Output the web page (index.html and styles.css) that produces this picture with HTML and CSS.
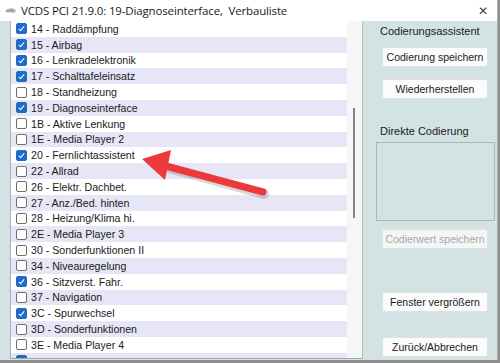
FILE: index.html
```html
<!DOCTYPE html>
<html lang="de">
<head>
    <meta charset="UTF-8">
    <title>VCDS PCI 21.9.0: 19-Diagnoseinterface, Verbauliste</title>
    <link rel="stylesheet" href="styles.css">
</head>
<body>

    <div class="window">
        <div class="titlebar">
            <svg class="app-icon" width="13" height="9" viewBox="0 0 13 9">
                <path d="M1 6 L3 3 L8 2 L12 4 L11 7 Z" fill="#b4c0cc"/>
                <path d="M2 5 L10 4" stroke="#7d8ea0" stroke-width="1"/>
            </svg>
            <span class="title">VCDS PCI 21.9.0: 19-Diagnoseinterface,&nbsp; Verbauliste</span>
            <span class="close">✕</span>
        </div>

        <div class="main">
            <div class="list">
                <div class="rows">
                    <label class="row"><span class="box checked"></span>14 - Raddämpfung</label>
                    <label class="row"><span class="box checked"></span>15 - Airbag</label>
                    <label class="row"><span class="box checked"></span>16 - Lenkradelektronik</label>
                    <label class="row"><span class="box checked"></span>17 - Schalttafeleinsatz</label>
                    <label class="row"><span class="box"></span>18 - Standheizung</label>
                    <label class="row"><span class="box checked"></span>19 - Diagnoseinterface</label>
                    <label class="row"><span class="box"></span>1B - Aktive Lenkung</label>
                    <label class="row"><span class="box"></span>1E - Media Player 2</label>
                    <label class="row"><span class="box checked"></span>20 - Fernlichtassistent</label>
                    <label class="row"><span class="box"></span>22 - Allrad</label>
                    <label class="row"><span class="box"></span>26 - Elektr. Dachbet.</label>
                    <label class="row"><span class="box"></span>27 - Anz./Bed. hinten</label>
                    <label class="row"><span class="box"></span>28 - Heizung/Klima hi.</label>
                    <label class="row"><span class="box"></span>2E - Media Player 3</label>
                    <label class="row"><span class="box"></span>30 - Sonderfunktionen II</label>
                    <label class="row"><span class="box"></span>34 - Niveauregelung</label>
                    <label class="row"><span class="box checked"></span>36 - Sitzverst. Fahr.</label>
                    <label class="row"><span class="box"></span>37 - Navigation</label>
                    <label class="row"><span class="box checked"></span>3C - Spurwechsel</label>
                    <label class="row"><span class="box"></span>3D - Sonderfunktionen</label>
                    <label class="row"><span class="box"></span>3E - Media Player 4</label>
                    <div class="row"><span class="box checked"></span></div>
                </div>
                <div class="scrollbar">
                    <div class="thumb"></div>
                </div>
            </div>

            <div class="panel">
                <div class="label first">Codierungsassistent</div>
                <button class="btn">Codierung speichern</button>
                <button class="btn">Wiederherstellen</button>
                <div class="label second">Direkte Codierung</div>
                <div class="code-box"></div>
                <button class="btn disabled">Codierwert speichern</button>
                <button class="btn grow">Fenster vergrößern</button>
                <button class="btn last">Zurück/Abbrechen</button>
            </div>
        </div>
    </div>

    <svg class="arrow" width="500" height="363" viewBox="0 0 500 363">
        <line x1="263" y1="192" x2="160" y2="164" stroke="rgba(0,0,0,0.15)" stroke-width="10" stroke-linecap="round" transform="translate(1,2)"/>
        <line x1="263" y1="192" x2="162" y2="165" stroke="#ec3a3a" stroke-width="7" stroke-linecap="round"/>
        <path d="M142 159 L171 150 L165 180 Z" fill="#ec3a3a"/>
    </svg>

</body>
</html>
```

FILE: styles.css
```css
body {
    margin: 0;
    width: 500px;
    height: 363px;
    overflow: hidden;
    position: relative;
    background: #8f8f8f;
    font-family: "Liberation Sans", Arial, sans-serif;
}

.window {
    width: 497px;
    height: 360px;
    background: #d3e2e2;
    border-right: 1px solid #9fb8a8;
    overflow: hidden;
}

.titlebar {
    height: 21px;
    background: #ffffff;
    display: flex;
    align-items: center;
    padding-left: 4px;
    font-family: "Open Sans", sans-serif;
    font-size: 11.5px;
    color: #1a1a1a;
}

.app-icon {
    margin-right: 4px;
}

.title {
    flex: 1;
    letter-spacing: -0.15px;
}

.close {
    width: 19px;
    font-size: 12px;
    color: #444;
}

.main {
    display: flex;
    height: 339px;
    padding-left: 10px;
}

.list {
    display: flex;
    width: 351px;
    background: #ffffff;
    border-left: 1px solid #a8b4b4;
    border-right: 1px solid #b4bcbc;
    border-bottom: 1px solid #a0a8a8;
    height: 337px;
    overflow: hidden;
}

.rows {
    width: 336px;
}

.row {
    display: flex;
    align-items: center;
    height: 15.8px;
    font-size: 10.6px;
    color: #1a1a1a;
    white-space: nowrap;
}

.row:nth-child(even) {
    background: #e6e6f7;
}

.box {
    width: 9px;
    height: 9px;
    margin: 0 4px 0 5px;
    border: 1px solid #6f6f6f;
    border-radius: 2px;
    background: #ffffff;
    position: relative;
}

.box.checked {
    background: #1e6cc6;
    border-color: #1e6cc6;
}

.box.checked::after {
    content: "";
    position: absolute;
    left: 3px;
    top: 1px;
    width: 2px;
    height: 5px;
    border: solid #ffffff;
    border-width: 0 1.5px 1.5px 0;
    transform: rotate(40deg);
}

.scrollbar {
    flex: 1;
    background: #f6f6f6;
    position: relative;
}

.thumb {
    position: absolute;
    left: 6px;
    top: 87px;
    width: 2px;
    height: 110px;
    background: #858585;
}

.panel {
    flex: 1;
    display: flex;
    flex-direction: column;
    padding-left: 13px;
    font-size: 11px;
    color: #1a1a1a;
}

.label {
    padding-left: 4px;
    height: 14px;
}

.label.first {
    margin-top: 4px;
}

.label.second {
    margin-top: 26px;
}

.btn {
    width: 106px;
    height: 20px;
    margin-left: 6px;
    padding: 0;
    border: 1px solid #dde2e2;
    border-radius: 2px;
    background: #fbfbfb;
    font-family: "Liberation Sans", Arial, sans-serif;
    font-size: 10.5px;
    color: #1a1a1a;
}

.btn + .btn {
    margin-top: 12px;
}

.label.first + .btn {
    margin-top: 8px;
}

.code-box {
    width: 117px;
    height: 77px;
    margin-top: 3px;
    border: 1px solid #a9b8b8;
    background: #d3e2e2;
}

.btn.disabled {
    margin-top: 8px;
    color: #a6a6a6;
    background: #f4f6f6;
}

.btn.disabled + .btn.grow {
    margin-top: 43px;
}

.btn.grow + .btn.last {
    margin-top: 25px;
}

.arrow {
    position: absolute;
    left: 0;
    top: 0;
}
```
